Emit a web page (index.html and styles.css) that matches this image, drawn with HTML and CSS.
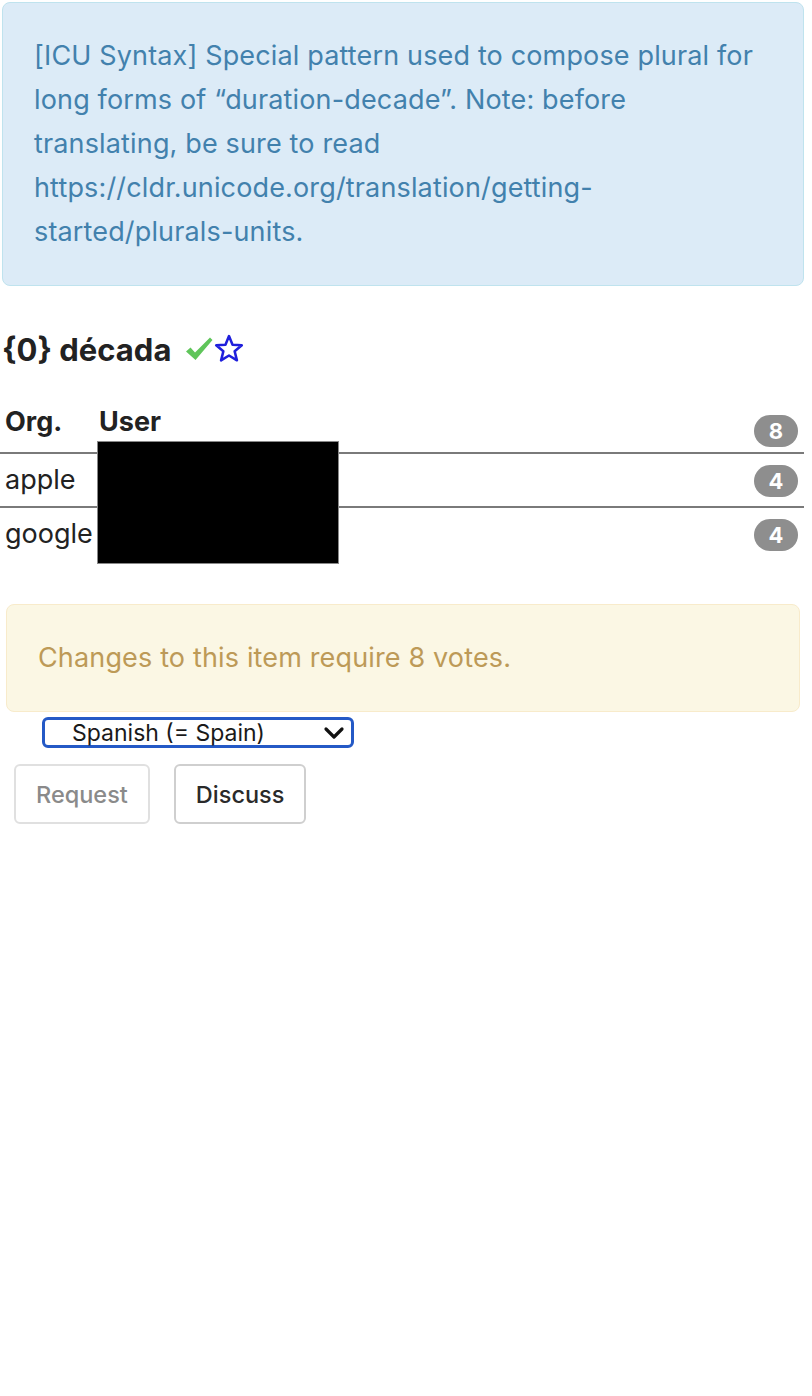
FILE: index.html
```html
<!DOCTYPE html>
<html>
<head>
<meta charset="utf-8">
<link rel="stylesheet" href="styles.css">
</head>
<body>
<div class="page">
  <div class="alert-info">[ICU Syntax] Special pattern used to compose plural for long forms of “duration-decade”. Note: before translating, be sure to read https://cldr.unicode.org/translation/getting-started/plurals-units.</div>

  <h3 class="value">{0} década <span class="icons"><svg class="check" width="30" height="30" viewBox="0 0 30 30"><path d="M2 17.5 L6.5 13.5 L11 18.5 L26 3.5 L28.5 6 L11.5 26 Z" fill="#5fc55a"/></svg><svg class="star" width="32" height="32" viewBox="0 0 24 24"><path d="M12 2.3l2.65 6.45 6.95.5-5.35 4.5 1.7 6.75L12 16.85l-5.95 3.65 1.7-6.75-5.35-4.5 6.95-.5z" fill="none" stroke="#1f1fdc" stroke-width="1.9" stroke-linejoin="round"/></svg></span></h3>

  <div class="votes">
    <table class="vote-table">
      <tr class="head">
        <th class="org">Org.</th>
        <th class="user">User</th>
        <td class="cnt"><span class="badge">8</span></td>
      </tr>
      <tr>
        <td class="org">apple</td>
        <td class="user"></td>
        <td class="cnt"><span class="badge">4</span></td>
      </tr>
      <tr>
        <td class="org">google</td>
        <td class="user"></td>
        <td class="cnt"><span class="badge">4</span></td>
      </tr>
    </table>
    <div class="redact"></div>
  </div>

  <div class="alert-warning">Changes to this item require 8 votes.</div>

  <div class="select-row">
    <div class="select"><span>Spanish (= Spain)</span><svg width="22" height="14" viewBox="0 0 22 14"><path d="M3 3l8 8 8-8" fill="none" stroke="#111" stroke-width="3.2" stroke-linecap="round" stroke-linejoin="round"/></svg></div>
  </div>

  <div class="buttons">
    <button class="btn disabled">Request</button>
    <button class="btn">Discuss</button>
  </div>
</div>
</body>
</html>
```

FILE: styles.css
```css
html, body {
  margin: 0;
  padding: 0;
  background: #fff;
}
body {
  font-family: Inter, "Liberation Sans", sans-serif;
  color: #222;
}
.page {
  padding: 2px 0 0 0;
}
.alert-info {
  margin: 0 8px 0 2px;
  background: #dcebf7;
  border: 1.5px solid #bfe3ee;
  border-radius: 8px;
  color: #4281ad;
  font-size: 27px;
  letter-spacing: 0.15px;
  line-height: 44px;
  padding: 31px 31px 31px 31px;
}
.value {
  margin: 42px 0 0 2px;
  font-size: 31px;
  font-weight: 700;
  line-height: 44px;
  color: #222;
  display: flex;
  align-items: center;
}
.icons {
  display: inline-flex;
  align-items: center;
  margin-left: 13px;
}
.check {
  display: block;
  margin-top: -2px;
}
.star {
  display: block;
  margin-left: -1px;
  margin-top: -2px;
}
.votes {
  position: relative;
  margin-top: 34px;
}
.vote-table {
  width: 804px;
  border-collapse: collapse;
  font-size: 27px;
  line-height: 32px;
}
.vote-table th {
  text-align: left;
  font-weight: 700;
}
.vote-table th, .vote-table td {
  padding: 0;
  height: 52px;
  vertical-align: middle;
}
.vote-table tr.head th, .vote-table tr.head td {
  height: 29px;
  vertical-align: bottom;
  padding-bottom: 14px;
}
.vote-table tr.head td.cnt {
  padding-bottom: 5px;
}
.vote-table tr {
  border-bottom: 2px solid #7a7a7a;
}
.vote-table tr:last-child {
  border-bottom: none;
}
.org {
  width: 94px;
  padding-left: 5px !important;
}
.cnt {
  text-align: right;
  padding-right: 6px !important;
}
.badge {
  display: inline-block;
  vertical-align: middle;
  background: #8e8e8e;
  color: #fff;
  font-weight: 700;
  font-size: 22px;
  line-height: 32px;
  min-width: 44px;
  text-align: center;
  border-radius: 16px;
}
.redact {
  position: absolute;
  left: 97px;
  top: 35px;
  width: 240px;
  height: 121px;
  background: #000;
  border: 1px solid #888;
}
.alert-warning {
  margin: 44px 12px 0 6px;
  background: #fbf7e4;
  border: 1.5px solid #f8ebcb;
  border-radius: 8px;
  color: #bd9a57;
  font-size: 27px;
  letter-spacing: 0.15px;
  line-height: 44px;
  padding: 31px 31px;
}
.select-row {
  padding: 5px 0 0 42px;
}
.select {
  height: 25px;
  width: 273px;
  border: 3px solid #2459c6;
  border-radius: 6px;
  display: flex;
  align-items: center;
  justify-content: space-between;
  padding: 0 6px 0 27px;
  box-sizing: content-box;
  font-size: 23px;
  color: #1a1a1a;
}
.buttons {
  display: flex;
  gap: 24px;
  padding: 16px 0 0 14px;
}
.btn {
  font-family: Inter, "Liberation Sans", sans-serif;
  font-size: 23.5px;
  font-weight: 500;
  background: #fff;
  border: 2px solid #cfcfcf;
  border-radius: 6px;
  height: 60px;
  padding: 0 20px;
  color: #2a2a2a;
}
.btn.disabled {
  border-color: #e0e0e0;
  color: #8a8a8a;
}
```
